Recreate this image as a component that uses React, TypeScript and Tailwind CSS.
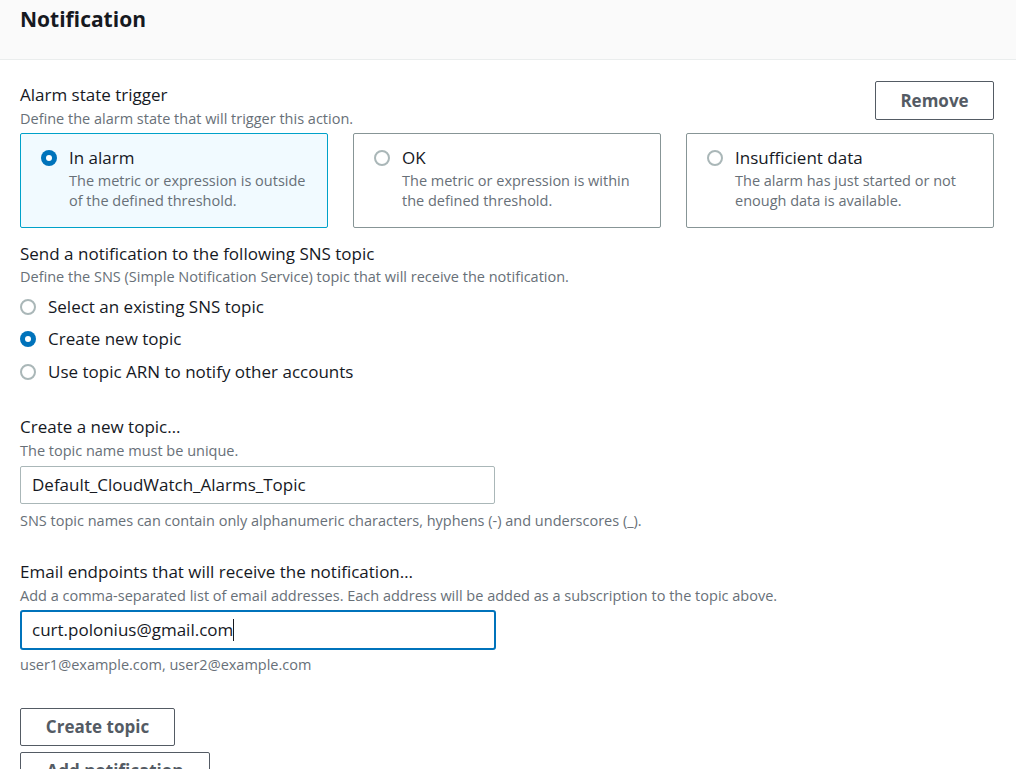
import React from 'react';

const font = { fontFamily: '"Open Sans", "Noto Sans", Arial, sans-serif' };

const Radio = ({ checked }: { checked?: boolean }) =>
  checked ? (
    <span className="w-4 h-4 shrink-0 rounded-full bg-[#0073bb] flex items-center justify-center">
      <span className="w-[6px] h-[6px] rounded-full bg-white" />
    </span>
  ) : (
    <span className="w-4 h-4 shrink-0 rounded-full border-2 border-[#aab7b8] bg-white" />
  );

const cards = [
  { title: 'In alarm', desc: 'The metric or expression is outside of the defined threshold.', checked: true },
  { title: 'OK', desc: 'The metric or expression is within the defined threshold.', checked: false },
  { title: 'Insufficient data', desc: 'The alarm has just started or not enough data is available.', checked: false },
];

const topics = [
  { label: 'Select an existing SNS topic', checked: false },
  { label: 'Create new topic', checked: true },
  { label: 'Use topic ARN to notify other accounts', checked: false },
];

export default function App() {
  return (
    <div className="w-[1016px] h-[769px] overflow-hidden bg-white text-[#16191f]" style={font}>
      {/* header */}
      <div className="h-[60px] bg-[#fafafa] border-b border-[#eaeded] px-5 pt-[3px]">
        <h2 className="text-[21px] font-bold leading-[32px] text-[#16191f]">Notification</h2>
      </div>

      <div className="pl-5 pr-[22px] pt-[23px]">
        {/* Alarm state trigger */}
        <div className="flex justify-between items-start">
          <div>
            <div className="text-[17px] leading-[24px]">Alarm state trigger</div>
            <div className="text-[14.5px] leading-[24px] text-[#687078]">Define the alarm state that will trigger this action.</div>
          </div>
          <button className="mt-[-2px] w-[119px] h-[39px] border border-[#545b64] rounded-[2px] text-[17px] font-bold text-[#545b64] bg-white">
            Remove
          </button>
        </div>

        <div className="grid grid-cols-3 gap-[25px] mt-[2px]">
          {cards.map((c) => (
            <div
              key={c.title}
              className={`h-[95px] rounded-[2px] border pl-5 pr-4 pt-[12px] ${
                c.checked ? 'bg-[#f1faff] border-[#00a1c9]' : 'bg-white border-[#879596]'
              }`}
            >
              <div className="flex items-center gap-3">
                <Radio checked={c.checked} />
                <span className="text-[17px] leading-[24px]">{c.title}</span>
              </div>
              <div className="pl-7 text-[14.5px] leading-[20px] text-[#687078] mt-[1px]">{c.desc}</div>
            </div>
          ))}
        </div>

        {/* SNS topic */}
        <div className="mt-[15px]">
          <div className="text-[17px] leading-[22px]">Send a notification to the following SNS topic</div>
          <div className="text-[14.5px] leading-[24px] text-[#687078]">
            Define the SNS (Simple Notification Service) topic that will receive the notification.
          </div>
          <div className="mt-[5px] flex flex-col gap-[7.5px]">
            {topics.map((t) => (
              <div key={t.label} className="flex items-center gap-3 h-[25px]">
                <Radio checked={t.checked} />
                <span className="text-[17px] leading-[24px]">{t.label}</span>
              </div>
            ))}
          </div>
        </div>

        {/* Create a new topic */}
        <div className="mt-[31px]">
          <div className="text-[17px] leading-[24px]">Create a new topic…</div>
          <div className="text-[14.5px] leading-[24px] text-[#687078]">The topic name must be unique.</div>
          <div className="mt-[3px] w-[475px] h-[38px] border border-[#aab7b8] rounded-[2px] px-[11px] flex items-center text-[17px]">
            Default_CloudWatch_Alarms_Topic
          </div>
          <div className="mt-[6px] text-[14.5px] leading-[22px] text-[#687078]">
            SNS topic names can contain only alphanumeric characters, hyphens (-) and underscores (_).
          </div>
        </div>

        {/* Email endpoints */}
        <div className="mt-[28px]">
          <div className="text-[17px] leading-[24px]">Email endpoints that will receive the notification…</div>
          <div className="text-[14.5px] leading-[24px] text-[#687078]">
            Add a comma-separated list of email addresses. Each address will be added as a subscription to the topic above.
          </div>
          <div className="mt-[2px] w-[476px] h-[40px] border-2 border-[#0073bb] rounded-[3px] px-[10px] flex items-center text-[17px]">
            curt.polonius@gmail.com
            <span className="w-px h-[22px] bg-[#16191f]" />
          </div>
          <div className="mt-[4px] text-[14.5px] leading-[22px] text-[#687078]">user1@example.com, user2@example.com</div>
        </div>

        <div className="mt-[32px] flex flex-col items-start gap-[6px]">
          <button className="w-[155px] h-[38px] border border-[#545b64] rounded-[2px] text-[17px] font-bold text-[#545b64] bg-white">
            Create topic
          </button>
          <button className="w-[190px] h-[38px] border border-[#545b64] rounded-[2px] text-[17px] font-bold text-[#545b64] bg-white">
            Add notification
          </button>
        </div>
      </div>
    </div>
  );
}
